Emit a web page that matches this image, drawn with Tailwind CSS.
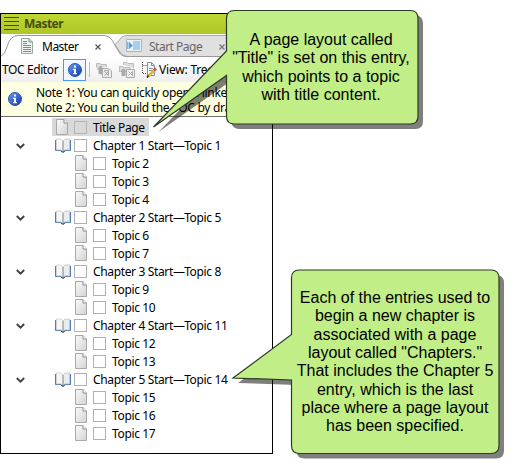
<!DOCTYPE html>
<html lang="en">
<head>
<meta charset="utf-8">
<title>Master</title>
<script src="https://cdn.jsdelivr.net/npm/@tailwindcss/browser@4"></script>
</head>
<body class="bg-white">
<svg class="absolute h-0 w-0">
  <defs>
  <linearGradient id="pg" x1="0" y1="0" x2="1" y2="1"><stop offset="0" stop-color="#fafafa"/><stop offset="1" stop-color="#d3d3d3"/></linearGradient>
  <linearGradient id="bl" x1="0" y1="0" x2="1" y2="1"><stop offset="0" stop-color="#6b9df2"/><stop offset="1" stop-color="#0b35a8"/></linearGradient>
  </defs>
  <symbol id="page" viewBox="0 0 12 16"><path d="M.5.5H8L11.5 4V15.500H.5Z" fill="url(#pg)" stroke="#a8a8a8"/><path d="M8 .5V4H11.500" fill="#fff" stroke="#8c8c8c"/></symbol>
  <symbol id="book" viewBox="0 0 16 15"><path d="M.5 2V12.500H6.500L8 14L9.500 12.500H15.500V2" fill="#dceaf8" stroke="#4c7db3"/><path d="M1.500 1H6L7.500 2.500V13L6 11.800H1.500Z" fill="#f6f6f6" stroke="#c4c4c4" stroke-width=".7"/><path d="M14.500 1H10L8.500 2.500V13L10 11.800H14.500Z" fill="#ececec" stroke="#bcbcbc" stroke-width=".7"/><path d="M8 3V13.500" stroke="#999" stroke-width=".8"/><path d="M6 13L8 14.500L10 13" fill="none" stroke="#444"/></symbol>
  <symbol id="info" viewBox="0 0 14 14"><circle cx="7" cy="7" r="6.500" fill="url(#bl)" stroke="#2a55b8"/><path d="M6 2.500H8V4.500H6ZM5 5.800H8V10H9V11.200H5V10H6V7H5Z" fill="#fff"/></symbol>
  <symbol id="chev" viewBox="0 0 9 6"><path d="M.8 1L4.500 4.600L8.200 1" fill="none" stroke="#404040" stroke-width="1.900"/></symbol>
</svg>
<div class="relative h-[469px] w-[514px] overflow-hidden bg-white pt-[13px] font-['Noto_Sans',sans-serif] text-[12px] text-black">
  <div class="flex h-[441px] w-[273px] flex-col overflow-hidden border border-black bg-white whitespace-nowrap">
    <header class="flex h-5 shrink-0 items-center bg-linear-to-b from-[#c0d632] to-[#b0c628] pl-[3px]">
      <svg class="h-[14px] w-[15px]" viewBox="0 0 15 14"><path d="M0 .5H15M0 4.500H15M0 8.500H15M0 12.500H15" stroke="#43500c"/></svg>
      <b class="ml-[5px] text-[12px] leading-5 tracking-[-0.55px] text-[#43500c]">Master</b>
    </header>
    <nav class="relative flex h-[23px] shrink-0 items-center bg-[#fafafa]">
      <svg class="absolute inset-0 h-[23px] w-[271px]" viewBox="0 0 271 23">
        <rect width="271" height="23" fill="#fcfcfc"/>
        <path d="M114 11L121 3Q123 1.500 126 1.500H271V22.500H126Q122 22 119 18Z" fill="#e0e0e0" stroke="#aaa"/>
        <path d="M0 22.500Q4 20 6 13Q9 1.500 17 1.500H102Q108 1.500 111 8Q114 18 122 22.500V24H0Z" fill="#fff"/>
        <path d="M0 22.500Q4 20 6 13Q9 1.500 17 1.500H102Q108 1.500 111 6L118 18Q120 22.500 126 22.500H271" fill="none" stroke="#999"/>
      </svg>
      <svg class="relative ml-5 h-4 w-3" viewBox="0 0 12 16"><path d="M.5.500H8L11.500 4V15.500H.5Z" fill="#edf3f1" stroke="#9aaaa5"/><path d="M8 .5V4H11.500M2 3.500H6M2 5.500H6M2 7.500H10M2 9.500H10M2 11.500H10M2 13.500H10" fill="none" stroke="#789088"/></svg>
      <span class="relative mt-[2px] ml-[9px] w-[53px] tracking-[-0.5px]">Master</span>
      <svg class="relative mt-[2px] h-[6px] w-[6px]" viewBox="0 0 6 6"><path d="M.5.500L5.500 5.500M5.500.500L.5 5.500" stroke="#555" stroke-width="1.200"/></svg>
      <svg class="relative ml-[25px] h-[13px] w-4" viewBox="0 0 16 13"><path d="M.5.500H15.500V12.500H.5Z" fill="#e9f0f6" stroke="#a2b7ca"/><path d="M7 2H14V11H7Z" fill="#a6cfec"/><path d="M1.500 3V10M3 3L6.500 6.500L3 10Z" fill="#4595cf" stroke="#80b5dc"/></svg>
      <span class="relative mt-[2px] ml-[7px] w-[70px] tracking-[-0.5px] text-[#666]">Start Page</span>
      <svg class="relative mt-[2px] h-[6px] w-[6px]" viewBox="0 0 6 6"><path d="M.5.500L5.500 5.500M5.500.500L.5 5.500" stroke="#777" stroke-width="1.200"/></svg>
    </nav>
    <div class="flex h-[25px] shrink-0 items-center bg-linear-to-b from-white to-[#eeeeee]">
      <span class="ml-px w-[61px] tracking-[-0.4px]">TOC Editor</span>
      <span class="flex h-[22px] w-[23px] items-center justify-center border border-[#4a9ae8] bg-[#f2f8ff]"><svg class="size-[14px]"><use href="#info"/></svg></span>
      <i class="ml-[3px] h-[15px] w-px bg-[#bbb]"></i>
      <svg class="ml-[6px] h-4 w-4" viewBox="0 0 16 16"><path d="M.5 5.500V1.500H4L5 2.500H10.500V5" fill="#ddd" stroke="#bbb"/><path d="M2.500 12V7.500H.5L4.500 3.500L8.500 7.500H6.500V12.500Z" fill="#aaa"/><path d="M6.500 6.500H12L15.500 9V15.500H6.500Z" fill="#eee" stroke="#aaa"/><path d="M8.500 9L12.500 14M12.500 9L8.500 14M8 8.500H12.500V13.500" fill="none" stroke="#aaa"/></svg>
      <svg class="ml-[7px] h-4 w-4" viewBox="0 0 16 16"><path d="M4.500 3V.500H8L9 1.500H14.500V6M.5 10V4.500H4L5 5.500H11V7" fill="#ddd" stroke="#bbb"/><path d="M2.500 14V10H1L4.500 6L8 10H6.500V14Z" fill="#aaa"/><path d="M7.500 7.500H15.500V15.500H7.500Z" fill="#eee" stroke="#aaa"/><path d="M9.500 9.500L13.500 13.500M13.500 9.500L9.500 13.500M13.500 9V14" fill="none" stroke="#aaa"/></svg>
      <svg class="ml-[7px] h-4 w-[15px]" viewBox="0 0 15 16"><path d="M.5 0V11.500H6M.5 3.500H5" fill="none" stroke="#555" stroke-dasharray="1 1"/><path d="M5.500.500H9.500L12.500 3.500V13.500H5.500Z" fill="#f3f8fa" stroke="#7d929b"/><path d="M9.500.500V3.500H12.500M7 6.500H11M7 8.500H11" fill="none" stroke="#7d929b"/><path d="M6 14.500L12.500 8" stroke="#e4b43c" stroke-width="2.600"/><path d="M5 15.500L6.500 13.500" stroke="#222" stroke-width="1.500"/><path d="M12 8.500L14 6.500" stroke="#d5504c" stroke-width="2.600"/></svg>
      <span class="ml-[2px] tracking-[-0.2px]">View: Tree</span>
    </div>
    <div class="flex h-[35px] shrink-0 items-center border-b border-[#707070] bg-[#ffffe1]">
      <svg class="ml-[7px] size-[14px] shrink-0"><use href="#info"/></svg>
      <div class="mt-px ml-[14px] text-[12px] leading-[15px] tracking-[-0.3px]"><p>Note 1: You can quickly open a linked topic</p><p>Note 2: You can build the TOC by dragging</p></div>
    </div>
    <ul id="toc" class="pt-px"></ul>
  </div>

  <svg class="absolute inset-0 h-[469px] w-[514px]" viewBox="0 0 514 469">
    <defs>
      <path id="c1" d="M234.500 10.500H410.500Q418 10.500 418 18.500V116Q418 124 410.500 124H234.500Q226.500 124 226.500 116V75.500L153.500 127L226.500 51V18.500Q226.500 10.500 234.500 10.500Z"/>
      <path id="c2" d="M299.500 270H491Q499 270 499 278V445.500Q499 453.500 491 453.500H299.500Q291.500 453.500 291.500 445.500V380L233 378L291.500 334.500V278Q291.500 270 299.500 270Z"/>
    </defs>
    <g fill="#000" fill-opacity=".5"><use href="#c1" x="5" y="5"/><use href="#c2" x="5" y="5"/></g>
    <g fill="#c1ee86" stroke="#2f3a24" stroke-width="1.200"><use href="#c1"/><use href="#c2"/></g>
  </svg>
  <p class="absolute top-[31px] left-[225px] w-[192px] text-center font-['Liberation_Sans',sans-serif] text-[16px] leading-[18.350px] whitespace-nowrap">A page layout called<br>"Title" is set on this entry,<br>which points to a topic<br>with title content.</p>
  <p class="absolute top-[289px] left-[291px] w-[208px] text-center font-['Liberation_Sans',sans-serif] text-[16px] leading-[18.350px] whitespace-nowrap">Each of the entries used to<br>begin a new chapter is<br>associated with a page<br>layout called "Chapters."<br>That includes the Chapter 5<br>entry, which is the last<br>place where a page layout<br>has been specified.</p>
</div>
<script>
  const chapters = [[1, 1, 2, 3, 4], [2, 5, 6, 7], [3, 8, 9, 10], [4, 11, 12, 13], [5, 14, 15, 16, 17]];
  let rows = `<li class="flex h-[18px] items-center pl-[51px]"><span class="flex h-[18px] w-[97px] items-center bg-[#d9d9d9] pl-1"><svg class="h-4 w-3 shrink-0"><use href="#page"/></svg><i class="mt-px ml-[6px] size-[13px] shrink-0 border border-[#b4b4b4]"></i><span class="mt-[2px] ml-[6px] tracking-[-0.35px]">Title Page</span></span></li>`;
  for (const [n, first, ...topics] of chapters) {
    rows += `<li class="flex h-[18px] items-center pl-[15px]"><svg class="mt-[2px] h-[6px] w-[9px]"><use href="#chev"/></svg><svg class="ml-[30px] h-[15px] w-4"><use href="#book"/></svg><i class="mt-px ml-[3px] size-[13px] border border-[#b0b0b0] bg-white"></i><span class="mt-[2px] ml-[6px] tracking-[-0.35px]">Chapter ${n} Start—Topic ${first}</span></li>`;
    for (const t of topics) rows += `<li class="flex h-[18px] items-center pl-[74px]"><svg class="h-4 w-3"><use href="#page"/></svg><i class="mt-px ml-[6px] size-[13px] border border-[#b0b0b0] bg-white"></i><span class="mt-[2px] ml-[6px] tracking-[-0.35px]">Topic ${t}</span></li>`;
  }
  document.getElementById('toc').innerHTML = rows;
</script>
</body>
</html>
